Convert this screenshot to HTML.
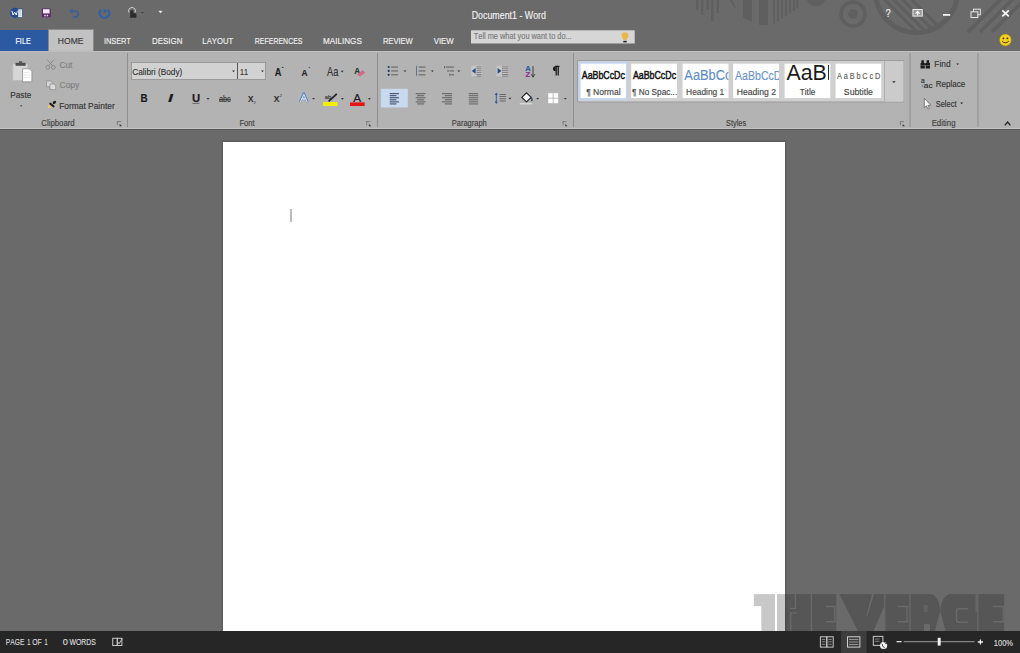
<!DOCTYPE html>
<html><head><meta charset="utf-8"><title>Document1 - Word</title>
<style>
html,body{margin:0;padding:0;width:1020px;height:653px;overflow:hidden;background:#6a6a6a}
svg{display:block;font-family:"Liberation Sans",sans-serif;font-kerning:none}
text{stroke-width:0.15px;paint-order:stroke}
</style></head><body>
<svg width="1020" height="653" viewBox="0 0 1020 653">
<defs>
<clipPath id="uclip"><circle cx="916.5" cy="-8" r="38.5"/></clipPath>
<mask id="vmask" maskUnits="userSpaceOnUse" x="740" y="580" width="280" height="60">
<rect x="740" y="580" width="280" height="60" fill="#fff"/>
<g fill="#000">
<rect x="753" y="606.1" width="8.3" height="26"/>
<rect x="775" y="594" width="2" height="38"/>
<rect x="794.8" y="593" width="1.3" height="15.6"/>
<rect x="790" y="607.8" width="6" height="1.3"/>
<rect x="790" y="612.4" width="7" height="1.3"/>
<rect x="790" y="613" width="1.3" height="19"/>
<rect x="810.8" y="593" width="1.3" height="39"/>
<rect x="826" y="605.8" width="9.5" height="1.4"/>
<rect x="826" y="621" width="9.5" height="1.4"/>
<rect x="834.2" y="606" width="1.3" height="16"/>
<polygon points="836.3,593 838.8,593 858.4,632 836.3,632"/>
<polygon points="884.4,606 884.4,632 873,632"/>
<polygon points="872.2,593 874.4,593 867,616.5 866.2,616.5"/>
<rect x="884.2" y="593" width="1.2" height="39"/>
<rect x="897.6" y="605.8" width="11" height="1.4"/>
<rect x="897.6" y="621" width="11" height="1.4"/>
<rect x="909.4" y="593" width="1.2" height="39"/>
<rect x="923.8" y="605" width="3.9" height="7" opacity="0.6"/>
<rect x="906.4" y="606" width="1.3" height="16"/>
<rect x="1002.6" y="606" width="1.3" height="16"/>
<rect x="924" y="624" width="6" height="8"/>
<path d="M927 593 Q939.6 593.5 940.2 612 Q941 593.5 954 593 Z"/>
<path d="M940.2 611 L945.8 632 L934.6 632 Z"/>
<path d="M968 608.8 H959.2 Q956.4 608.8 956.4 612 V619 Q956.4 622.2 959.2 622.2 H968" fill="none" stroke="#000" stroke-width="1.4"/>
<rect x="975.6" y="593" width="1.2" height="19"/>
<rect x="977.2" y="593" width="1.2" height="39"/>
<rect x="993" y="605.8" width="11.5" height="1.4"/>
<rect x="993" y="621" width="11.5" height="1.4"/>
</g>
</mask>
</defs>
<rect x="0" y="0" width="1020" height="653" fill="#6a6a6a"/>
<g fill="#5f5f5f"><rect x="696" y="0" width="2.4" height="10"/><rect x="701" y="0" width="2.4" height="15"/><rect x="706.3" y="0" width="2.4" height="9.5"/><rect x="711" y="0" width="2.4" height="21"/><rect x="716.6" y="0" width="2.4" height="13"/><path d="M729.5 0 L732 0 L736 8 L734.5 8 Z"/><path d="M743 0 H752 V22 L743 17 Z"/><rect x="759" y="0" width="9" height="25"/><rect x="773" y="0" width="2" height="23.5"/><rect x="777" y="0" width="2" height="21.0"/><rect x="781" y="0" width="2" height="18.5"/><rect x="785" y="0" width="2" height="16.0"/><rect x="789" y="0" width="2" height="13.5"/><rect x="793" y="0" width="2" height="11.0"/><rect x="796.5" y="0" width="2" height="8.5"/><circle cx="816" cy="-3" r="9.5"/><circle cx="853" cy="14" r="12" fill="none" stroke="#5f5f5f" stroke-width="3.5"/><circle cx="853" cy="14" r="4.8"/><circle cx="916.5" cy="-8" r="40.8" fill="none" stroke="#5f5f5f" stroke-width="5"/><g clip-path="url(#uclip)"><path d="M881 -4 l36 36" stroke="#5f5f5f" stroke-width="3"/><path d="M890 -4 l36 36" stroke="#5f5f5f" stroke-width="3"/><path d="M899 -4 l36 36" stroke="#5f5f5f" stroke-width="3"/><path d="M908 -4 l36 36" stroke="#5f5f5f" stroke-width="3"/></g><path d="M1004 -4 l-36 36" stroke="#5f5f5f" stroke-width="3.4"/><path d="M1016 -4 l-36 36" stroke="#5f5f5f" stroke-width="3.4"/><path d="M1028 -4 l-36 36" stroke="#5f5f5f" stroke-width="3.4"/></g>
<rect x="0" y="30" width="48" height="21" fill="#2c5aa2"/>
<rect x="48" y="29" width="46" height="23" fill="#8a8a8a"/>
<rect x="49" y="30" width="44" height="22" fill="#c2c2c2"/>
<rect x="0" y="51" width="1020" height="77.5" fill="#b3b3b3"/>
<rect x="0" y="51" width="1020" height="1" fill="#bebebe"/>
<rect x="49" y="50" width="44" height="2" fill="#bdbdbd"/>
<rect x="0" y="128" width="1020" height="1" fill="#c4c4c4"/>
<rect x="0" y="129" width="1020" height="1" fill="#565656"/>
<rect x="127" y="53" width="1" height="74" fill="#8e8e8e"/>
<rect x="377" y="53" width="1" height="74" fill="#8e8e8e"/>
<rect x="573" y="53" width="1" height="74" fill="#8e8e8e"/>
<rect x="909.5" y="53" width="1" height="74" fill="#8e8e8e"/>
<rect x="977.5" y="53" width="1" height="74" fill="#8e8e8e"/>
<rect x="221" y="140" width="566" height="495" fill="#646464"/>
<rect x="222" y="141" width="564" height="495" fill="#5c5c5c"/>
<rect x="223" y="142" width="562" height="495" fill="#ffffff"/>
<rect x="290.3" y="209" width="1.4" height="13" fill="#a0a0a0"/>
<text transform="translate(471.67 18.90) scale(0.8026 1)" font-size="11.05" font-weight="normal" font-style="normal" fill="#f2f2f2" stroke="#f2f2f2">Document1 - Word</text>
<text transform="translate(15.40 43.80) scale(0.7608 1)" font-size="9.59" font-weight="normal" font-style="normal" fill="#ffffff" stroke="#ffffff">FILE</text>
<text transform="translate(57.80 43.60) scale(0.9235 1)" font-size="9.30" font-weight="normal" font-style="normal" fill="#3a3a3a" stroke="#3a3a3a">HOME</text>
<text transform="translate(103.92 43.60) scale(0.7899 1)" font-size="9.30" font-weight="normal" font-style="normal" fill="#f0f0f0" stroke="#f0f0f0">INSERT</text>
<text transform="translate(151.95 43.60) scale(0.8552 1)" font-size="9.30" font-weight="normal" font-style="normal" fill="#f0f0f0" stroke="#f0f0f0">DESIGN</text>
<text transform="translate(202.36 43.60) scale(0.8333 1)" font-size="9.30" font-weight="normal" font-style="normal" fill="#f0f0f0" stroke="#f0f0f0">LAYOUT</text>
<text transform="translate(254.83 43.60) scale(0.7502 1)" font-size="9.30" font-weight="normal" font-style="normal" fill="#f0f0f0" stroke="#f0f0f0">REFERENCES</text>
<text transform="translate(323.03 43.60) scale(0.8737 1)" font-size="9.30" font-weight="normal" font-style="normal" fill="#f0f0f0" stroke="#f0f0f0">MAILINGS</text>
<text transform="translate(382.88 43.60) scale(0.8161 1)" font-size="9.30" font-weight="normal" font-style="normal" fill="#f0f0f0" stroke="#f0f0f0">REVIEW</text>
<text transform="translate(433.67 43.60) scale(0.8481 1)" font-size="9.30" font-weight="normal" font-style="normal" fill="#f0f0f0" stroke="#f0f0f0">VIEW</text>
<rect x="471" y="30.3" width="163.7" height="13.2" fill="#d6d6d6"/>
<text transform="translate(473.83 39.20) scale(0.9067 1)" font-size="8.14" font-weight="normal" font-style="normal" fill="#7a7a7a" stroke="#7a7a7a">Tell me what you want to do...</text>
<text transform="translate(41.30 126.30) scale(0.9586 1)" font-size="8.14" font-weight="normal" font-style="normal" fill="#3e3e3e" stroke="#3e3e3e">Clipboard</text>
<text transform="translate(239.38 126.30) scale(0.9319 1)" font-size="8.14" font-weight="normal" font-style="normal" fill="#3e3e3e" stroke="#3e3e3e">Font</text>
<text transform="translate(451.79 126.30) scale(0.9208 1)" font-size="8.14" font-weight="normal" font-style="normal" fill="#3e3e3e" stroke="#3e3e3e">Paragraph</text>
<text transform="translate(726.07 126.30) scale(0.9023 1)" font-size="8.14" font-weight="normal" font-style="normal" fill="#3e3e3e" stroke="#3e3e3e">Styles</text>
<text transform="translate(931.66 126.30) scale(0.9622 1)" font-size="8.14" font-weight="normal" font-style="normal" fill="#3e3e3e" stroke="#3e3e3e">Editing</text>
<text transform="translate(10.33 98.00) scale(0.9760 1)" font-size="8.43" font-weight="normal" font-style="normal" fill="#333333" stroke="#333333">Paste</text>
<text transform="translate(59.48 68.20) scale(0.9819 1)" font-size="8.43" font-weight="normal" font-style="normal" fill="#808080" stroke="#808080">Cut</text>
<text transform="translate(59.47 88.20) scale(1.0137 1)" font-size="8.43" font-weight="normal" font-style="normal" fill="#808080" stroke="#808080">Copy</text>
<text transform="translate(59.21 109.20) scale(0.9960 1)" font-size="8.43" font-weight="normal" font-style="normal" fill="#333333" stroke="#333333">Format Painter</text>
<rect x="131.5" y="62.5" width="106" height="17" fill="#d2d2d2" stroke="#9a9a9a" stroke-width="1"/>
<rect x="237.5" y="62.5" width="28" height="17" fill="#d2d2d2" stroke="#9a9a9a" stroke-width="1"/>
<rect x="237" y="63" width="1" height="16" fill="#555"/>
<text transform="translate(132.18 74.90) scale(0.8934 1)" font-size="9.30" font-weight="normal" font-style="normal" fill="#333333" stroke="#333333">Calibri (Body)</text>
<text transform="translate(240.04 74.90) scale(0.7839 1)" font-size="9.30" font-weight="normal" font-style="normal" fill="#333333" stroke="#333333">11</text>
<rect x="0" y="631" width="1020" height="22" fill="#262626"/>
<rect x="841" y="631" width="25.6" height="22" fill="#3d3d3d"/>
<text transform="translate(5.85 645.20) scale(0.8240 1)" font-size="8.14" font-weight="normal" font-style="normal" fill="#dcdcdc" stroke="#dcdcdc">PAGE</text>
<text transform="translate(27.18 645.20) scale(0.6839 1)" font-size="8.14" font-weight="normal" font-style="normal" fill="#dcdcdc" stroke="#dcdcdc">1</text>
<text transform="translate(32.18 645.20) scale(0.8403 1)" font-size="8.14" font-weight="normal" font-style="normal" fill="#dcdcdc" stroke="#dcdcdc">OF</text>
<text transform="translate(44.38 645.20) scale(0.6839 1)" font-size="8.14" font-weight="normal" font-style="normal" fill="#dcdcdc" stroke="#dcdcdc">1</text>
<text transform="translate(62.74 645.20) scale(1.1308 1)" font-size="8.14" font-weight="normal" font-style="normal" fill="#dcdcdc" stroke="#dcdcdc">0</text>
<text transform="translate(69.47 645.20) scale(0.8477 1)" font-size="8.14" font-weight="normal" font-style="normal" fill="#dcdcdc" stroke="#dcdcdc">WORDS</text>
<text transform="translate(993.72 645.60) scale(0.8673 1)" font-size="8.72" font-weight="normal" font-style="normal" fill="#dcdcdc" stroke="#dcdcdc">100%</text>
<circle cx="15.2" cy="12.9" r="5.1" fill="#234b8e"/>
<path d="M11.9 10.9 L13.1 15 L14.7 12.2 L16.3 15 L17.5 10.9" fill="none" stroke="#fff" stroke-width="1"/>
<rect x="17.9" y="9" width="4.6" height="8.6" fill="#f2f4f8" stroke="#234b8e" stroke-width="0.7"/>
<path d="M19 11h2.4M19 13h2.4M19 15h2.4" stroke="#7f97c0" stroke-width="0.6"/>
<rect x="41.8" y="8.6" width="9" height="8.6" rx="0.6" fill="#5c2a6c"/>
<rect x="43" y="9.2" width="6.6" height="4.2" fill="#f4e8f4"/>
<rect x="44.3" y="14.8" width="1.4" height="1.5" fill="#f4e8f4"/><rect x="46.7" y="14.8" width="1.4" height="1.5" fill="#f4e8f4"/>
<path d="M71 11.2 H76 A3 3 0 0 1 76 17 H73" fill="none" stroke="#41608c" stroke-width="1.9"/>
<path d="M69 11.2 L72.6 8.2 V14.2 Z" fill="#41608c"/>
<path d="M101.2 9.5 A4.9 4.9 0 1 0 107.8 9.5" fill="none" stroke="#2f62a6" stroke-width="2.2"/>
<path d="M104.3 8 L106.5 12.5 L102.5 12.5 Z" fill="#2f62a6" transform="rotate(-20 104.5 10)"/>
<path d="M130.2 16.8 V11.5 A1.6 1.6 0 0 1 133.4 11.5 V13.2 H135 A1.4 1.4 0 0 1 136.4 14.6 V17.7 H130.2 Z" fill="#2c2c2c"/>
<path d="M129 12.5 A3.4 3.4 0 1 1 135 12.5" fill="none" stroke="#d8d8d8" stroke-width="1"/>
<path d="M141.3 12 h2.4 l-1.2 1.5 z" fill="#333"/>
<path d="M158.8 10.9 h3.4 l-1.7 2.3 z" fill="#eee" stroke="#eee" stroke-width="0.3" stroke-linejoin="round"/>
<text transform="translate(885.84 16.50) scale(0.8514 1)" font-size="10.32" font-weight="normal" font-style="normal" fill="#f2f2f2" stroke="#f2f2f2">?</text>
<rect x="912.9" y="9.5" width="9.4" height="6.6" fill="#9a9a9a" stroke="#e8e8e8" stroke-width="1"/>
<path d="M917.6 15.6 V11.8 M915.6 13.6 L917.6 11.4 L919.6 13.6" fill="none" stroke="#ffffff" stroke-width="1.2"/>
<rect x="943" y="14" width="7.2" height="1.8" fill="#f4f4f4"/>
<rect x="973.5" y="9.2" width="6.8" height="5.5" fill="none" stroke="#e8e8e8" stroke-width="1"/>
<rect x="971" y="11.8" width="6.8" height="5.7" fill="#6a6a6a" stroke="#e8e8e8" stroke-width="1"/>
<path d="M1002.3 10.4 L1008.8 16.3 M1008.8 10.4 L1002.3 16.3" stroke="#f8f8f8" stroke-width="1.7"/>
<circle cx="1005.4" cy="40" r="6" fill="#f3cf1f" stroke="#9a7a10" stroke-width="0.5"/>
<circle cx="1003.4" cy="38.3" r="0.9" fill="#3a2a00"/><circle cx="1007.4" cy="38.3" r="0.9" fill="#3a2a00"/>
<path d="M1002 41.2 Q1005.4 44.5 1008.8 41.2" fill="none" stroke="#3a2a00" stroke-width="0.9"/>
<circle cx="625" cy="35.6" r="3.4" fill="#eab64a"/><rect x="623.2" y="37.5" width="3.6" height="2.4" fill="#eab64a"/>
<rect x="623.3" y="40.8" width="3.4" height="1.6" fill="#222"/>
<rect x="12.8" y="64" width="14.8" height="16.4" fill="#d6d6d6" stroke="#bcbcbc" stroke-width="0.7"/>
<rect x="15.6" y="62.8" width="10" height="3" fill="#4e4e4e"/>
<rect x="19" y="61.2" width="3.2" height="2" fill="#5a5a5a"/>
<path d="M22.6 68.8 H29.4 L31.9 71.3 V81.8 H22.6 Z" fill="#ffffff" stroke="#8a8a8a" stroke-width="0.8"/>
<path d="M24.2 72.5 h5 M24.2 75 h6 M24.2 77.5 h6" stroke="#e0e0e0" stroke-width="0.7"/>
<path d="M20 105.3 h2.4 l-1.2 1.4 z" fill="#444"/>
<circle cx="47.8" cy="67.3" r="1.9" fill="none" stroke="#858585" stroke-width="0.9"/>
<circle cx="53.4" cy="67.3" r="1.9" fill="none" stroke="#858585" stroke-width="0.9"/>
<path d="M48.8 65.6 L53.8 59.8 M52.4 65.6 L47.4 59.8" stroke="#858585" stroke-width="0.9"/>
<path d="M46.5 80.9 H50.5 L52.2 82.6 V86.8 H46.5 Z" fill="#d6d6d6" stroke="#8a8a8a" stroke-width="0.7"/>
<path d="M50 84 H54 L55.7 85.7 V89.6 H50 Z" fill="#dcdcdc" stroke="#8a8a8a" stroke-width="0.7"/>
<ellipse cx="54.4" cy="102.4" rx="1.9" ry="1.3" transform="rotate(-35 54.4 102.4)" fill="#152015"/>
<path d="M50.3 103.7 L53.5 106.3" stroke="#2a1c12" stroke-width="2.1" stroke-linecap="round"/>
<path d="M48.2 104.4 L51.4 107 L49.8 108.4 L47.8 108.1 Z" fill="#f0c674"/>
<path d="M117 121.60000000000001 h4 M117.4 121.2 v4" stroke="#707070" stroke-width="0.8"/>
<path d="M119.6 123.8 l2.4 2.4 h-2.4 z" fill="#333"/>
<path d="M366.3 121.7 h4 M366.7 121.3 v4" stroke="#707070" stroke-width="0.8"/>
<path d="M368.90000000000003 123.89999999999999 l2.4 2.4 h-2.4 z" fill="#333"/>
<path d="M562.6 121.7 h4 M563.0 121.3 v4" stroke="#707070" stroke-width="0.8"/>
<path d="M565.2 123.89999999999999 l2.4 2.4 h-2.4 z" fill="#333"/>
<path d="M900 121.7 h4 M900.4 121.3 v4" stroke="#707070" stroke-width="0.8"/>
<path d="M902.6 123.89999999999999 l2.4 2.4 h-2.4 z" fill="#333"/>
<path d="M232.00 70.50 h3 l-1.5 1.7 z" fill="#333"/>
<path d="M261.00 70.50 h3 l-1.5 1.7 z" fill="#333"/>
<text transform="translate(274.77 75.90) scale(0.8151 1)" font-size="11.34" font-weight="bold" font-style="normal" fill="#222" stroke="#222">A</text>
<path d="M281.6 68 l1.1 -1.2 l1.1 1.2 z" fill="#222"/>
<text transform="translate(301.59 75.90) scale(0.8445 1)" font-size="9.88" font-weight="bold" font-style="normal" fill="#222" stroke="#222">A</text>
<path d="M308.3 67.2 h2 l-1 1.1 z" fill="#222"/>
<text transform="translate(326.98 75.90) scale(0.7670 1)" font-size="12.06" font-weight="normal" font-style="normal" fill="#333" stroke="#333">Aa</text>
<path d="M340.70 70.80 h3 l-1.5 1.7 z" fill="#333"/>
<text transform="translate(354.30 73.50) scale(1.0072 1)" font-size="8.14" font-weight="bold" font-style="normal" fill="#1e3a2a" stroke="#1e3a2a">A</text>
<path d="M357 74.8 L362.2 70.2 L365.4 72.4 L360.2 76.6 Z" fill="#d06a84"/>
<text transform="translate(140.54 101.80) scale(0.9810 1)" font-size="10.03" font-weight="bold" font-style="normal" fill="#1a1a1a" stroke="#1a1a1a">B</text>
<text transform="translate(168.09 101.80) scale(1.7616 1)" font-size="10.03" font-weight="bold" font-style="italic" fill="#1a1a1a" stroke="#1a1a1a">I</text>
<text transform="translate(191.92 101.80) scale(1.1280 1)" font-size="10.03" font-weight="bold" font-style="normal" fill="#1a1a1a" stroke="#1a1a1a">U</text>
<rect x="192.5" y="102.9" width="7" height="0.8" fill="#555"/>
<path d="M206.50 98.00 h3 l-1.5 1.7 z" fill="#333"/>
<text transform="translate(218.99 102.00) scale(0.7995 1)" font-size="9.16" font-weight="normal" font-style="normal" fill="#333" stroke="#333">abc</text>
<rect x="219" y="99.2" width="12" height="0.9" fill="#333"/>
<text transform="translate(247.88 102.00) scale(1.0113 1)" font-size="10.76" font-weight="normal" font-style="normal" fill="#1a1a1a" stroke="#1a1a1a">x</text>
<text transform="translate(253.60 104.30) scale(0.9061 1)" font-size="4.36" font-weight="normal" font-style="normal" fill="#555" stroke="#555">2</text>
<text transform="translate(273.87 102.00) scale(1.0502 1)" font-size="10.76" font-weight="normal" font-style="normal" fill="#1a1a1a" stroke="#1a1a1a">x</text>
<text transform="translate(279.80 96.60) scale(0.9061 1)" font-size="4.36" font-weight="normal" font-style="normal" fill="#555" stroke="#555">2</text>
<path d="M300 102 L303.8 93.4 L307.6 102" fill="none" stroke="#5a86c4" stroke-width="2.4" stroke-linejoin="round"/>
<path d="M300.4 102 L303.8 94.3 L307.2 102 M301.8 98.8 H305.8" fill="none" stroke="#e8eef6" stroke-width="0.9"/>
<path d="M312.00 97.90 h3 l-1.5 1.7 z" fill="#333"/>
<text transform="translate(324.75 98.50) scale(0.9562 1)" font-size="6.10" font-weight="normal" font-style="normal" fill="#333" stroke="#333">ab</text>
<path d="M328.6 101.4 L336.8 93.8" stroke="#222" stroke-width="1.8"/>
<rect x="323" y="102" width="14.6" height="4" fill="#f2ef00"/>
<path d="M340.90 98.00 h3 l-1.5 1.7 z" fill="#333"/>
<text transform="translate(353.18 101.50) scale(1.0510 1)" font-size="11.19" font-weight="normal" font-style="normal" fill="#1a1a1a" stroke="#1a1a1a">A</text>
<rect x="350" y="102.4" width="14.7" height="3.6" fill="#e51515"/>
<path d="M367.90 98.00 h3 l-1.5 1.7 z" fill="#333"/>
<circle cx="388.7" cy="67" r="1.1" fill="#1d3f6a"/>
<rect x="391.2" y="66.6" width="6.8" height="0.9" fill="#555"/>
<circle cx="388.7" cy="70.9" r="1.1" fill="#1d3f6a"/>
<rect x="391.2" y="70.5" width="6.8" height="0.9" fill="#555"/>
<circle cx="388.7" cy="74.8" r="1.1" fill="#1d3f6a"/>
<rect x="391.2" y="74.39999999999999" width="6.8" height="0.9" fill="#555"/>
<path d="M403.50 70.40 h3 l-1.5 1.7 z" fill="#333"/>
<rect x="416" y="65.8" width="0.9" height="10" fill="#5a6f8c"/>
<rect x="418.6" y="66.6" width="6.9" height="0.9" fill="#555"/>
<rect x="418.6" y="70.5" width="6.9" height="0.9" fill="#555"/>
<rect x="418.6" y="74.39999999999999" width="6.9" height="0.9" fill="#555"/>
<path d="M430.90 70.40 h3 l-1.5 1.7 z" fill="#333"/>
<rect x="444.2" y="66" width="0.9" height="2.2" fill="#555"/><rect x="447.6" y="69.8" width="0.9" height="2.2" fill="#555"/>
<rect x="446" y="66.6" width="8" height="0.9" fill="#555"/><rect x="449.5" y="70.5" width="4.5" height="0.9" fill="#555"/><rect x="450" y="74.4" width="4" height="0.9" fill="#555"/>
<rect x="449" y="73.2" width="0.7" height="3" fill="#777"/>
<path d="M457.30 70.40 h3 l-1.5 1.7 z" fill="#333"/>
<rect x="471.2" y="65.6" width="10" height="10.6" fill="#c6c6c6"/>
<rect x="476.50" y="66.40" width="4.70" height="1.00" fill="#808080"/>
<rect x="476.50" y="68.30" width="4.70" height="1.00" fill="#808080"/>
<rect x="476.50" y="70.20" width="4.70" height="1.00" fill="#808080"/>
<rect x="476.50" y="72.10" width="4.70" height="1.00" fill="#808080"/>
<rect x="476.50" y="74.00" width="4.70" height="1.00" fill="#808080"/>
<rect x="476.50" y="75.60" width="4.70" height="1.00" fill="#808080"/>
<path d="M471.8 70.9 L475.6 68 V73.8 Z" fill="#2a4a8a"/>
<rect x="496.5" y="65.6" width="11.7" height="10.6" fill="#c6c6c6"/>
<rect x="502.00" y="66.40" width="6.20" height="1.00" fill="#808080"/>
<rect x="502.00" y="68.30" width="6.20" height="1.00" fill="#808080"/>
<rect x="502.00" y="70.20" width="6.20" height="1.00" fill="#808080"/>
<rect x="502.00" y="72.10" width="6.20" height="1.00" fill="#808080"/>
<rect x="502.00" y="74.00" width="6.20" height="1.00" fill="#808080"/>
<rect x="502.00" y="75.60" width="6.20" height="1.00" fill="#808080"/>
<path d="M501.5 70.9 L497.6 68 V73.8 Z" fill="#2a4a8a"/>
<text transform="translate(525.31 71.00) scale(1.0460 1)" font-size="7.27" font-weight="bold" font-style="normal" fill="#2d5a9a" stroke="#2d5a9a">A</text>
<text transform="translate(525.57 77.00) scale(1.1375 1)" font-size="6.69" font-weight="bold" font-style="normal" fill="#8a2a8a" stroke="#8a2a8a">Z</text>
<path d="M533 66 V76" stroke="#333" stroke-width="0.9"/><path d="M531.2 74.2 L533 77.2 L534.8 74.2" fill="none" stroke="#333" stroke-width="0.9"/>
<path d="M555.2 66.3 H559.4 M556.2 66.3 V75.6 M558.2 66.3 V75.6" stroke="#111" stroke-width="1.2"/>
<path d="M555.6 66.3 A2.6 2.5 0 0 0 555.6 71.3 Z" fill="#111"/>
<rect x="380.9" y="88.8" width="26.9" height="18.7" fill="#c9d9ee"/>
<rect x="389.70" y="93.20" width="9.30" height="0.95" fill="#2c3a58"/>
<rect x="389.70" y="95.25" width="6.70" height="0.95" fill="#2c3a58"/>
<rect x="389.70" y="97.30" width="9.30" height="0.95" fill="#2c3a58"/>
<rect x="389.70" y="99.35" width="6.70" height="0.95" fill="#2c3a58"/>
<rect x="389.70" y="101.40" width="9.30" height="0.95" fill="#2c3a58"/>
<rect x="389.70" y="103.45" width="6.70" height="0.95" fill="#2c3a58"/>
<rect x="415.70" y="93.20" width="9.80" height="0.95" fill="#5a5a5a"/>
<rect x="417.07" y="95.25" width="7.06" height="0.95" fill="#5a5a5a"/>
<rect x="415.70" y="97.30" width="9.80" height="0.95" fill="#5a5a5a"/>
<rect x="417.07" y="99.35" width="7.06" height="0.95" fill="#5a5a5a"/>
<rect x="415.70" y="101.40" width="9.80" height="0.95" fill="#5a5a5a"/>
<rect x="417.07" y="103.45" width="7.06" height="0.95" fill="#5a5a5a"/>
<rect x="442.00" y="93.20" width="10.00" height="0.95" fill="#5a5a5a"/>
<rect x="444.80" y="95.25" width="7.20" height="0.95" fill="#5a5a5a"/>
<rect x="442.00" y="97.30" width="10.00" height="0.95" fill="#5a5a5a"/>
<rect x="444.80" y="99.35" width="7.20" height="0.95" fill="#5a5a5a"/>
<rect x="442.00" y="101.40" width="10.00" height="0.95" fill="#5a5a5a"/>
<rect x="444.80" y="103.45" width="7.20" height="0.95" fill="#5a5a5a"/>
<rect x="468.80" y="93.20" width="9.40" height="0.95" fill="#5e5e5e"/>
<rect x="468.80" y="95.25" width="9.40" height="0.95" fill="#5e5e5e"/>
<rect x="468.80" y="97.30" width="9.40" height="0.95" fill="#5e5e5e"/>
<rect x="468.80" y="99.35" width="9.40" height="0.95" fill="#5e5e5e"/>
<rect x="468.80" y="101.40" width="9.40" height="0.95" fill="#5e5e5e"/>
<rect x="468.80" y="103.45" width="9.40" height="0.95" fill="#5e5e5e"/>
<path d="M496.3 93.5 V103" stroke="#2d5a9a" stroke-width="1"/>
<path d="M494.7 95 L496.3 92.6 L497.9 95 Z M494.7 101.6 L496.3 104 L497.9 101.6 Z" fill="#2d5a9a"/>
<rect x="499.50" y="94.00" width="6.40" height="0.80" fill="#555"/>
<rect x="499.50" y="96.20" width="6.40" height="0.80" fill="#555"/>
<rect x="499.50" y="98.40" width="6.40" height="0.80" fill="#555"/>
<rect x="499.50" y="100.60" width="6.40" height="0.80" fill="#555"/>
<path d="M508.50 97.80 h3 l-1.5 1.7 z" fill="#333"/>
<path d="M526.5 92.8 L531.2 97.4 L526.5 101.8 L521.8 97.4 Z" fill="#f4f4f4" stroke="#1a1a1a" stroke-width="1.1"/>
<path d="M530.6 96.6 Q533 99 531.5 101" fill="none" stroke="#2a4a70" stroke-width="1.3"/>
<rect x="519.7" y="103.1" width="12.6" height="1.3" fill="#dcdcdc"/>
<path d="M536.10 97.90 h3 l-1.5 1.7 z" fill="#333"/>
<rect x="548.2" y="93.2" width="10" height="10" fill="#ffffff"/>
<path d="M553.2 93.2 V103.2 M548.2 98.2 H558.2" stroke="#b5b5b5" stroke-width="0.9"/>
<path d="M563.80 97.90 h3 l-1.5 1.7 z" fill="#333"/>
<rect x="577.5" y="60.5" width="326" height="41.5" fill="#cfcfcf" stroke="#9c9c9c" stroke-width="1"/>
<rect x="884.6" y="61" width="19" height="40.5" fill="#cbcbcb"/>
<rect x="884.1" y="61" width="0.8" height="40.5" fill="#a8a8a8"/>
<path d="M892.2 81.2 h3.4 l-1.7 1.9 z" fill="#222"/>
<rect x="578.2" y="61.5" width="49.4" height="38.8" fill="#c4d3ee"/>
<rect x="580.6" y="63.7" width="45.30" height="34.4" fill="#ffffff"/>
<rect x="631.2" y="63.7" width="45.80" height="34.4" fill="#ffffff"/>
<rect x="682.6" y="63.7" width="45.90" height="34.4" fill="#ffffff"/>
<rect x="733.2" y="63.7" width="45.80" height="34.4" fill="#ffffff"/>
<rect x="784.6" y="63.7" width="45.70" height="34.4" fill="#ffffff"/>
<rect x="835.6" y="63.7" width="45.60" height="34.4" fill="#ffffff"/>
<text transform="translate(581.78 78.50) scale(0.8672 1)" font-size="10.17" font-weight="normal" font-style="normal" fill="#111111" stroke="#111111" style="stroke-width:0.45px">AaBbCcDc</text>
<text transform="translate(586.17 95.00) scale(0.9770 1)" font-size="8.72" font-weight="normal" font-style="normal" fill="#444" stroke="#444">¶ Normal</text>
<text transform="translate(632.98 78.50) scale(0.8672 1)" font-size="10.17" font-weight="normal" font-style="normal" fill="#111111" stroke="#111111" style="stroke-width:0.45px">AaBbCcDc</text>
<text transform="translate(632.08 95.00) scale(0.9446 1)" font-size="8.72" font-weight="normal" font-style="normal" fill="#444" stroke="#444">¶ No Spac...</text>
<svg x="682.6" y="63" width="45.9" height="36" overflow="hidden"><text transform="translate(1.77 16.70) scale(0.8807 1)" font-size="14.54" font-weight="normal" font-style="normal" fill="#5f8dc6" stroke="#5f8dc6">AaBbCc</text></svg>
<text transform="translate(686.11 94.60) scale(0.9581 1)" font-size="8.72" font-weight="normal" font-style="normal" fill="#444" stroke="#444">Heading 1</text>
<svg x="733.2" y="63" width="45.8" height="36" overflow="hidden"><text transform="translate(1.78 16.70) scale(0.8891 1)" font-size="11.92" font-weight="normal" font-style="normal" fill="#6e95c8" stroke="#6e95c8">AaBbCcD</text></svg>
<text transform="translate(736.69 94.60) scale(0.9895 1)" font-size="8.72" font-weight="normal" font-style="normal" fill="#444" stroke="#444">Heading 2</text>
<text transform="translate(786.56 80.10) scale(0.9771 1)" font-size="21.80" font-weight="normal" font-style="normal" fill="#1a1a1a" stroke="#1a1a1a" style="stroke-width:0">AaB</text>
<rect x="828" y="65" width="0.9" height="15" fill="#111"/>
<text transform="translate(799.71 95.40) scale(0.8908 1)" font-size="9.30" font-weight="normal" font-style="normal" fill="#444" stroke="#444">Title</text>
<text transform="translate(836.99 78.60) scale(0.7914 1)" font-size="9.30" font-weight="normal" font-style="normal" fill="#5a5a5a" stroke="#5a5a5a" letter-spacing="2.326">AaBbCcD</text>
<text transform="translate(843.80 95.40) scale(0.9406 1)" font-size="9.30" font-weight="normal" font-style="normal" fill="#444" stroke="#444">Subtitle</text>
<path d="M921.4 60.3 h2.5 v2.6 h0.9 v5.5 h-4.3 v-5.5 h0.9 z M926.6 60.3 h2.5 v2.6 h0.9 v5.5 h-4.3 v-5.5 h0.9 z" fill="#1c1c1c"/>
<rect x="924.6" y="63.4" width="1.6" height="2" fill="#1c1c1c"/>
<rect x="920.3" y="65.2" width="10.2" height="0.6" fill="#7a7a7a"/>
<text transform="translate(934.32 67.40) scale(0.9253 1)" font-size="9.01" font-weight="normal" font-style="normal" fill="#333" stroke="#333">Find</text>
<path d="M956.20 63.40 h3 l-1.5 1.7 z" fill="#333"/>
<text transform="translate(921.03 83.30) scale(0.9020 1)" font-size="7.12" font-weight="normal" font-style="normal" fill="#2a2a2a" stroke="#2a2a2a">a</text>
<text transform="translate(923.85 88.30) scale(1.0855 1)" font-size="7.56" font-weight="normal" font-style="normal" fill="#2a2a2a" stroke="#2a2a2a">ac</text>
<path d="M921.5 86 L923.5 84.6 M921.5 86 L923.5 87.2" stroke="#4a78c0" stroke-width="0.6" fill="none"/>
<text transform="translate(935.64 86.60) scale(0.8959 1)" font-size="9.01" font-weight="normal" font-style="normal" fill="#333" stroke="#333">Replace</text>
<path d="M924.3 98.3 V107.8 L926.4 105.8 L928 109 L929.4 108.3 L927.8 105.3 H930.8 Z" fill="#ffffff" stroke="#555" stroke-width="0.7"/>
<text transform="translate(935.66 106.60) scale(0.8343 1)" font-size="9.01" font-weight="normal" font-style="normal" fill="#333" stroke="#333">Select</text>
<path d="M960.10 102.50 h3 l-1.5 1.7 z" fill="#333"/>
<path d="M1004.8 125.4 L1007.6 122 L1010.4 125.4" fill="none" stroke="#222" stroke-width="1.3"/>
<rect x="112.7" y="638.3" width="4.6" height="7.2" fill="none" stroke="#c8c8c8" stroke-width="1"/>
<rect x="117.3" y="638.3" width="4.6" height="7.2" fill="none" stroke="#c8c8c8" stroke-width="1"/>
<path d="M117.6 641.8 L119 643.8 L122.4 638.4" fill="none" stroke="#c8c8c8" stroke-width="1"/>
<rect x="820.4" y="636.8" width="6.4" height="10.3" fill="none" stroke="#c8c8c8" stroke-width="1"/>
<rect x="826.8" y="636.8" width="6.4" height="10.3" fill="none" stroke="#c8c8c8" stroke-width="1"/>
<rect x="821.80" y="639.00" width="3.60" height="0.80" fill="#9a9a9a"/>
<rect x="821.80" y="641.40" width="3.60" height="0.80" fill="#9a9a9a"/>
<rect x="821.80" y="643.80" width="3.60" height="0.80" fill="#9a9a9a"/>
<rect x="828.20" y="639.00" width="3.60" height="0.80" fill="#9a9a9a"/>
<rect x="828.20" y="641.40" width="3.60" height="0.80" fill="#9a9a9a"/>
<rect x="828.20" y="643.80" width="3.60" height="0.80" fill="#9a9a9a"/>
<rect x="847.5" y="636.8" width="12.4" height="10.3" fill="none" stroke="#d0d0d0" stroke-width="1"/>
<rect x="849.00" y="639.20" width="9.40" height="0.80" fill="#a8a8a8"/>
<rect x="849.00" y="641.60" width="9.40" height="0.80" fill="#a8a8a8"/>
<rect x="849.00" y="644.00" width="9.40" height="0.80" fill="#a8a8a8"/>
<rect x="873.3" y="636.4" width="9.6" height="9" fill="none" stroke="#c8c8c8" stroke-width="1"/>
<rect x="874.80" y="638.60" width="4.70" height="0.80" fill="#9a9a9a"/>
<rect x="874.80" y="640.80" width="4.70" height="0.80" fill="#9a9a9a"/>
<circle cx="883.6" cy="645.5" r="3.6" fill="#f0f0f0"/>
<path d="M881.5 643.6 q1.5 1 1 2.5 q1.5 0.5 2 2 M884.5 642.3 q0.5 1.5 2.6 1.6" fill="none" stroke="#262626" stroke-width="0.8"/>
<rect x="896.5" y="641" width="5.1" height="1.3" fill="#e0e0e0"/>
<rect x="903.7" y="641.2" width="71" height="1" fill="#9a9a9a"/>
<rect x="937.7" y="637.8" width="3" height="7.8" fill="#f0f0f0"/>
<path d="M977.8 642 H983 M980.4 639.4 V644.6" stroke="#f0f0f0" stroke-width="1.3"/>
<rect x="753.9" y="594.1" width="250.3" height="36.9" fill="rgba(20,20,20,0.235)" mask="url(#vmask)"/>
</svg>
</body></html>
